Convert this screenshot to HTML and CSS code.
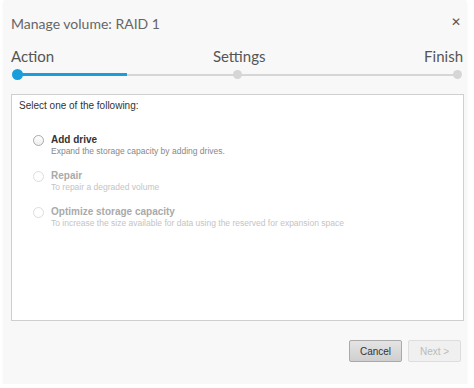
FILE: index.html
```html
<!DOCTYPE html>
<html lang="en">
<head>
    <meta charset="UTF-8">
    <title>Manage volume: RAID 1</title>
    <link rel="stylesheet" href="styles.css">
</head>
<body>
    <div class="dialog">
        <div class="dialog-head">
            <h2 class="dialog-title">Manage volume: RAID 1</h2>
            <span class="close">&#x2715;</span>
        </div>

        <div class="steps">
            <div class="step-labels">
                <span>Action</span>
                <span>Settings</span>
                <span>Finish</span>
            </div>
            <div class="track">
                <div class="track-fill"></div>
                <span class="dot dot-active"></span>
                <span class="dot dot-mid"></span>
                <span class="dot dot-end"></span>
            </div>
        </div>

        <div class="panel">
            <p class="panel-lead">Select one of the following:</p>
            <ul class="options">
                <li class="option">
                    <span class="radio"></span>
                    <div>
                        <div class="opt-name">Add drive</div>
                        <div class="opt-desc">Expand the storage capacity by adding drives.</div>
                    </div>
                </li>
                <li class="option disabled">
                    <span class="radio"></span>
                    <div>
                        <div class="opt-name">Repair</div>
                        <div class="opt-desc">To repair a degraded volume</div>
                    </div>
                </li>
                <li class="option disabled">
                    <span class="radio"></span>
                    <div>
                        <div class="opt-name">Optimize storage capacity</div>
                        <div class="opt-desc">To increase the size available for data using the reserved for expansion space</div>
                    </div>
                </li>
            </ul>
        </div>

        <div class="actions">
            <button class="btn btn-cancel">Cancel</button>
            <button class="btn btn-next" disabled>Next &gt;</button>
        </div>
    </div>
</body>
</html>
```

FILE: styles.css
```css
body {
    margin: 0;
    background: #fff;
    font-family: "Liberation Sans", Arial, sans-serif;
}
.dialog {
    width: 462px;
    height: 384px;
    margin-left: 4px;
    background: #f8f8f8;
    box-shadow: 0 1px 3px rgba(0,0,0,0.08);
    display: flex;
    flex-direction: column;
    box-sizing: border-box;
}
.dialog-head {
    display: flex;
    justify-content: space-between;
    align-items: center;
    padding: 13px 7px 0 7px;
    height: 20px;
}
.dialog-title {
    margin: 0;
    font-family: Lato, sans-serif;
    font-weight: normal;
    font-size: 14px;
    color: #666;
}
.close {
    font-size: 12px;
    color: #555;
    margin-right: -2px;
    margin-top: -2px;
}
.steps {
    padding: 14px 3px 0 7px;
}
.step-labels {
    display: flex;
    justify-content: space-between;
    font-family: Lato, sans-serif;
    font-size: 15px;
    color: #555;
    line-height: 18px;
}
.track {
    position: relative;
    height: 10px;
    margin: 5px 6px 0 6px;
}
.track::before {
    content: "";
    position: absolute;
    left: 0;
    right: 0;
    top: 4px;
    height: 2px;
    background: #d6d6d6;
}
.track-fill {
    position: absolute;
    left: 0;
    top: 3px;
    width: 110px;
    height: 3px;
    background: #1a9edb;
}
.dot {
    position: absolute;
    top: 0;
    width: 9px;
    height: 9px;
    border-radius: 50%;
    background: #d6d6d6;
    margin-left: -4px;
}
.dot-active {
    left: 0;
    width: 11px;
    height: 11px;
    top: -1px;
    margin-left: -5px;
    background: #1a9edb;
}
.dot-mid { left: 50%; }
.dot-end { left: 100%; }
.panel {
    margin: 14px 2px 0 7px;
    height: 227px;
    background: #fff;
    border: 1px solid #cfcfcf;
    padding: 5px 7px 0 7px;
    box-sizing: border-box;
}
.panel-lead {
    margin: 0;
    font-size: 10px;
    color: #333;
}
.options {
    list-style: none;
    margin: 23px 0 0 0;
    padding: 0 0 0 14px;
}
.option {
    display: flex;
    align-items: flex-start;
    gap: 7px;
    height: 36px;
}
.radio {
    width: 9px;
    height: 9px;
    border: 1px solid #aaa;
    border-radius: 50%;
    margin-top: 1px;
    background: linear-gradient(#fff, #eee);
}
.opt-name {
    font-size: 10px;
    font-weight: bold;
    color: #333;
    line-height: 12px;
}
.opt-desc {
    font-size: 8.5px;
    color: #888;
    line-height: 10px;
}
.disabled .radio { border-color: #ddd; background: #fff; }
.disabled .opt-name { color: #aaa; }
.disabled .opt-desc { color: #c4c4c4; }
.actions {
    display: flex;
    justify-content: flex-end;
    gap: 6px;
    padding: 19px 5px 0 0;
}
.btn {
    width: 53px;
    height: 22px;
    font-family: "Liberation Sans", Arial, sans-serif;
    font-size: 10px;
    border-radius: 2px;
    padding: 0;
}
.btn-cancel {
    background: linear-gradient(#e4e4e4, #cfcfcf);
    border: 1px solid #aaa;
    color: #333;
}
.btn-next {
    background: #f0f0f0;
    border: 1px solid #ddd;
    color: #bbb;
}
```
